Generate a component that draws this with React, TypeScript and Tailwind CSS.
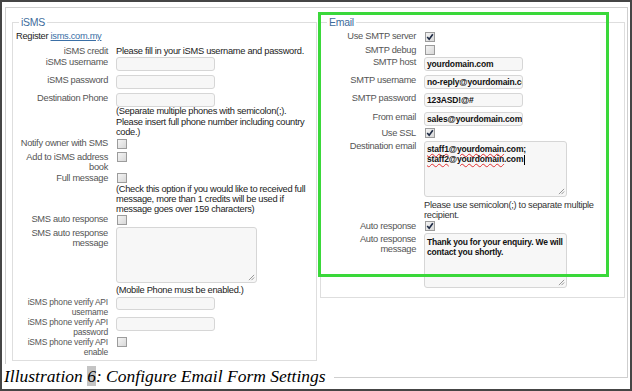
import React from 'react'

const ui = "font-['Liberation_Sans',Arial,sans-serif]"

function Input({ value, h = 'h-[14px]' }: { value?: string; h?: string }) {
  return (
    <div className={`${h} w-[99px] overflow-hidden whitespace-nowrap rounded-[3px] border border-[#d6d6d6] bg-[#f7f7f7] pl-[2px] text-[8.5px] font-bold leading-[12px] tracking-[-0.15px] text-[#111]`}>
      {value}
    </div>
  )
}

function Check({ on, className = '' }: { on?: boolean; className?: string }) {
  return (
    <div className={`relative size-[10px] border border-[#9c9c9c] bg-gradient-to-br from-[#f4f4f4] to-[#d8d8d8] ${className}`}>
      {on && (
        <svg viewBox="0 0 10 10" className="absolute -left-px -top-px size-[10px]">
          <path d="M2.2 5 L4.2 7.3 L7.8 2.2" fill="none" stroke="#1d2a44" strokeWidth="1.6" />
        </svg>
      )}
    </div>
  )
}

function Grip() {
  return (
    <svg viewBox="0 0 8 8" className="absolute bottom-[1px] right-[1px] size-[7px]">
      <path d="M1 7 L7 1 M4 7 L7 4" stroke="#8a8a8a" strokeWidth="1" />
    </svg>
  )
}

function Row({ label, h, children }: { label?: React.ReactNode; h: string; children?: React.ReactNode }) {
  return (
    <div className={`flex ${h}`}>
      <div className="w-[95px] shrink-0 text-right leading-[10px] text-[#555]">{label}</div>
      <div className="ml-[8px] min-w-0 flex-1">{children}</div>
    </div>
  )
}

function Legend({ text }: { text: string }) {
  return (
    <span className="absolute -top-[7px] left-[6px] bg-white px-[2px] text-[10.5px] leading-[13px] tracking-[-0.3px] text-[#3d6c9c]">
      {text}
    </span>
  )
}

export default function App() {
  return (
    <div className={`relative h-[391px] w-[632px] overflow-hidden border-2 border-[#454545] bg-white text-[9.3px] tracking-[-0.3px] ${ui}`}>
      <div className="ml-[3px] mt-[5px] h-[371px] w-[623px] border border-[#cfcfcf]">
        <div className="flex items-start pl-[6px] pt-[14px]">
          {/* iSMS */}
          <div className="relative h-[339px] w-[305px] border border-[#dedede] pt-[8px]">
            <Legend text="iSMS" />
            <div className="h-[15px] pl-[3px] leading-[10px] text-[#222]">
              Register <span className="text-[#3b6fa6] underline">isms.com.my</span>
            </div>
            <Row label="iSMS credit" h="h-[11px]">
              <div className="whitespace-nowrap leading-[10px] text-[#222]">Please fill in your iSMS username and password.</div>
            </Row>
            <Row label="iSMS username" h="h-[18px]"><Input /></Row>
            <Row label="iSMS password" h="h-[18px]"><Input /></Row>
            <Row label="Destination Phone" h="h-[13px]"><Input /></Row>
            <Row h="h-[32px]">
              <div className="whitespace-nowrap leading-[10.5px] text-[#222]">
                (Separate multiple phones with semicolon(;).
                <br />
                Please insert full phone number including country
                <br />
                code.)
              </div>
            </Row>
            <Row label="Notify owner with SMS" h="h-[14px]"><Check className="ml-[1px] mt-[1px]" /></Row>
            <Row label={<>Add to iSMS address<br />book</>} h="h-[21px]"><Check className="ml-[1px]" /></Row>
            <Row label="Full message" h="h-[11px]"><Check className="ml-[1px]" /></Row>
            <Row h="h-[30px]">
              <div className="whitespace-nowrap leading-[10px] text-[#222]">
                (Check this option if you would like to received full
                <br />
                message, more than 1 credits will be used if
                <br />
                message goes over 159 characters)
              </div>
            </Row>
            <Row label="SMS auto response" h="h-[13px]"><Check className="ml-[1px] mt-[1px]" /></Row>
            <Row label={<div className="pt-[1px]">SMS auto response<br />message</div>} h="h-[58px]">
              <div className="relative h-[56px] w-[141px] rounded-[3px] border border-[#d6d6d6] bg-[#f7f7f7]">
                <Grip />
              </div>
            </Row>
            <Row h="h-[12px]">
              <div className="leading-[10px] text-[#222]">(Mobile Phone must be enabled.)</div>
            </Row>
            <Row label={<span className="text-[8.5px] tracking-[-0.2px]">iSMS phone verify API<br />username</span>} h="h-[20px]"><Input h="h-[13px]" /></Row>
            <Row label={<span className="text-[8.5px] tracking-[-0.2px]">iSMS phone verify API<br />password</span>} h="h-[20px]"><Input /></Row>
            <Row label={<span className="text-[8.5px] tracking-[-0.2px]">iSMS phone verify API<br />enable</span>} h="h-[20px]"><Check className="ml-[1px]" /></Row>
          </div>

          {/* Email */}
          <div className="relative ml-[3px] h-[276px] w-[305px] border border-[#dedede] pt-[8px]">
            <Legend text="Email" />
            <Row label="Use SMTP server" h="h-[14px]"><Check on className="ml-[1px] mt-[1px]" /></Row>
            <Row label="SMTP debug" h="h-[12px]"><Check className="ml-[1px]" /></Row>
            <Row label="SMTP host" h="h-[18px]"><Input value="yourdomain.com" /></Row>
            <Row label="SMTP username" h="h-[18px]"><Input value="no-reply@yourdomain.com" /></Row>
            <Row label="SMTP password" h="h-[19px]"><Input value="123ASD!@#" /></Row>
            <Row label="From email" h="h-[16px]"><Input value="sales@yourdomain.com" /></Row>
            <Row label="Use SSL" h="h-[13px]"><Check on className="ml-[1px]" /></Row>
            <Row label="Destination email" h="h-[59px]">
              <div className="relative h-[56px] w-[143px] whitespace-nowrap rounded-[3px] border border-[#d6d6d6] bg-[#f7f7f7] pl-[2px] pt-[3px] text-[8.5px] font-bold leading-[9.5px] tracking-[-0.15px] text-[#111]">
                <span className="underline decoration-[#e03030] decoration-wavy underline-offset-[1px]">staff1</span>@<span className="underline decoration-[#e03030] decoration-wavy underline-offset-[1px]">yourdomain</span>.com;
                <br />
                <span className="underline decoration-[#e03030] decoration-wavy underline-offset-[1px]">staff2</span>@<span className="underline decoration-[#e03030] decoration-wavy underline-offset-[1px]">yourdomain</span>.com<span className="ml-px inline-block h-[10px] w-px bg-black align-middle" />
                <Grip />
              </div>
            </Row>
            <Row h="h-[21px]">
              <div className="whitespace-nowrap pt-[1px] leading-[9.5px] text-[#333]">
                Please use semicolon(;) to separate multiple
                <br />
                recipient.
              </div>
            </Row>
            <Row label="Auto response" h="h-[12px]"><Check on className="ml-[1px]" /></Row>
            <Row label={<div className="pt-[1px]">Auto response<br />message</div>} h="h-[55px]">
              <div className="relative h-[55px] w-[143px] whitespace-nowrap rounded-[3px] border border-[#d6d6d6] bg-[#f7f7f7] pl-[2px] pt-[3px] text-[8.5px] font-bold leading-[10px] tracking-[-0.2px] text-[#111]">
                Thank you for your enquiry. We will
                <br />
                contact you shortly.
                <Grip />
              </div>
            </Row>
          </div>
        </div>
      </div>

      {/* highlight frame */}
      <div className="absolute left-[316px] top-[10px] h-[265px] w-[291px] border-[3px] border-[#3ad83a]" />

      {/* caption */}
      <div className="absolute left-0 top-[362px] h-[27px] bg-white pl-[2px] pr-[8px] pt-[2px] font-['Liberation_Serif',serif] text-[17.5px] italic leading-[20px] tracking-normal text-black">
        Illustration <span className="bg-[#c4c4c4]">6</span>: Configure Email Form Settings
      </div>
    </div>
  )
}
